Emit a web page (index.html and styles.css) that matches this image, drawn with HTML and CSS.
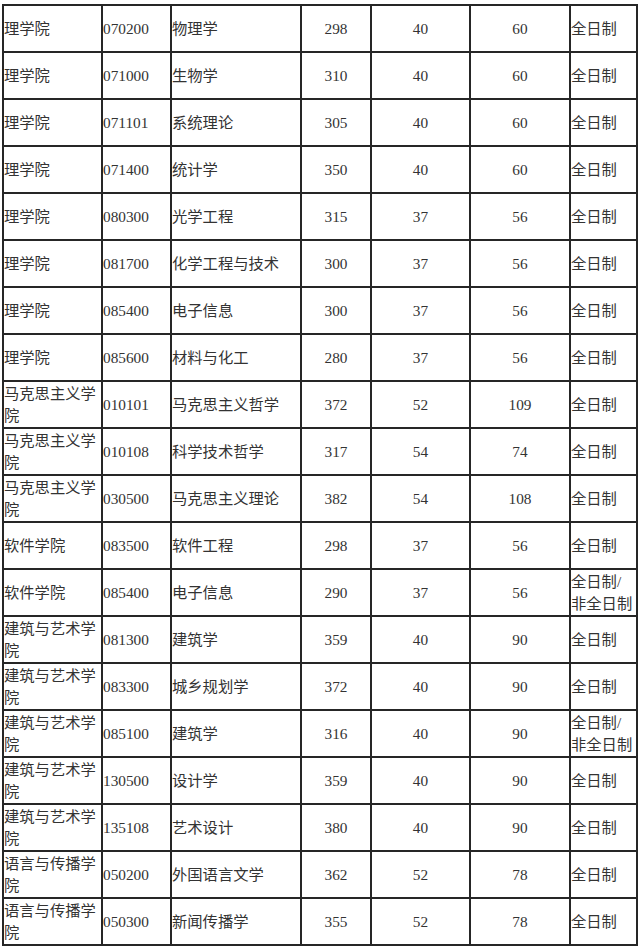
FILE: index.html
```html
<!DOCTYPE html>
<html lang="zh-CN">
<head>
<meta charset="utf-8">
<title>录取分数线</title>
<link rel="stylesheet" href="styles.css">
</head>
<body>
<div class="sheet">
  <div class="c">理学院</div><div class="c">070200</div><div class="c">物理学</div><div class="c n">298</div><div class="c n">40</div><div class="c n">60</div><div class="c">全日制</div>
  <div class="c">理学院</div><div class="c">071000</div><div class="c">生物学</div><div class="c n">310</div><div class="c n">40</div><div class="c n">60</div><div class="c">全日制</div>
  <div class="c">理学院</div><div class="c">071101</div><div class="c">系统理论</div><div class="c n">305</div><div class="c n">40</div><div class="c n">60</div><div class="c">全日制</div>
  <div class="c">理学院</div><div class="c">071400</div><div class="c">统计学</div><div class="c n">350</div><div class="c n">40</div><div class="c n">60</div><div class="c">全日制</div>
  <div class="c">理学院</div><div class="c">080300</div><div class="c">光学工程</div><div class="c n">315</div><div class="c n">37</div><div class="c n">56</div><div class="c">全日制</div>
  <div class="c">理学院</div><div class="c">081700</div><div class="c">化学工程与技术</div><div class="c n">300</div><div class="c n">37</div><div class="c n">56</div><div class="c">全日制</div>
  <div class="c">理学院</div><div class="c">085400</div><div class="c">电子信息</div><div class="c n">300</div><div class="c n">37</div><div class="c n">56</div><div class="c">全日制</div>
  <div class="c">理学院</div><div class="c">085600</div><div class="c">材料与化工</div><div class="c n">280</div><div class="c n">37</div><div class="c n">56</div><div class="c">全日制</div>
  <div class="c">马克思主义学<br>院</div><div class="c">010101</div><div class="c">马克思主义哲学</div><div class="c n">372</div><div class="c n">52</div><div class="c n">109</div><div class="c">全日制</div>
  <div class="c">马克思主义学<br>院</div><div class="c">010108</div><div class="c">科学技术哲学</div><div class="c n">317</div><div class="c n">54</div><div class="c n">74</div><div class="c">全日制</div>
  <div class="c">马克思主义学<br>院</div><div class="c">030500</div><div class="c">马克思主义理论</div><div class="c n">382</div><div class="c n">54</div><div class="c n">108</div><div class="c">全日制</div>
  <div class="c">软件学院</div><div class="c">083500</div><div class="c">软件工程</div><div class="c n">298</div><div class="c n">37</div><div class="c n">56</div><div class="c">全日制</div>
  <div class="c">软件学院</div><div class="c">085400</div><div class="c">电子信息</div><div class="c n">290</div><div class="c n">37</div><div class="c n">56</div><div class="c">全日制/<br>非全日制</div>
  <div class="c">建筑与艺术学<br>院</div><div class="c">081300</div><div class="c">建筑学</div><div class="c n">359</div><div class="c n">40</div><div class="c n">90</div><div class="c">全日制</div>
  <div class="c">建筑与艺术学<br>院</div><div class="c">083300</div><div class="c">城乡规划学</div><div class="c n">372</div><div class="c n">40</div><div class="c n">90</div><div class="c">全日制</div>
  <div class="c">建筑与艺术学<br>院</div><div class="c">085100</div><div class="c">建筑学</div><div class="c n">316</div><div class="c n">40</div><div class="c n">90</div><div class="c">全日制/<br>非全日制</div>
  <div class="c">建筑与艺术学<br>院</div><div class="c">130500</div><div class="c">设计学</div><div class="c n">359</div><div class="c n">40</div><div class="c n">90</div><div class="c">全日制</div>
  <div class="c">建筑与艺术学<br>院</div><div class="c">135108</div><div class="c">艺术设计</div><div class="c n">380</div><div class="c n">40</div><div class="c n">90</div><div class="c">全日制</div>
  <div class="c">语言与传播学<br>院</div><div class="c">050200</div><div class="c">外国语言文学</div><div class="c n">362</div><div class="c n">52</div><div class="c n">78</div><div class="c">全日制</div>
  <div class="c">语言与传播学<br>院</div><div class="c">050300</div><div class="c">新闻传播学</div><div class="c n">355</div><div class="c n">52</div><div class="c n">78</div><div class="c">全日制</div>
</div>
</body>
</html>
```
FILE: styles.css
```css
html, body {
  margin: 0;
  padding: 0;
  background: #ffffff;
}

body {
  font-family: "Liberation Serif", "Noto Sans CJK SC", serif;
  font-size: 15.3px;
  color: #333333;
}

.sheet {
  margin: 4px 0 0 2px;
  width: 636px;
  box-sizing: border-box;
  display: grid;
  grid-template-columns: 97px 67px 128px 68px 97px 98px 65px;
  grid-auto-rows: 45px;
  gap: 2px;
  padding: 2px;
  background: #262626;
}

.c {
  background: #ffffff;
  display: flex;
  align-items: center;
  line-height: 22px;
  white-space: nowrap;
  overflow: hidden;
}

.n {
  justify-content: center;
}
```
